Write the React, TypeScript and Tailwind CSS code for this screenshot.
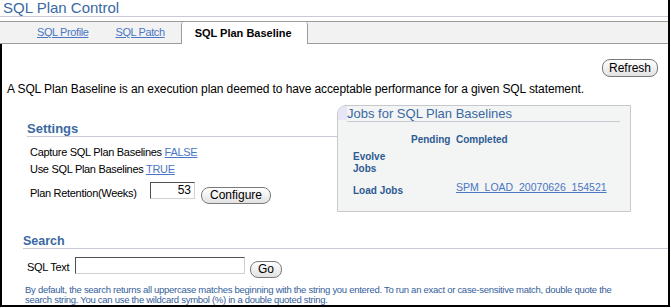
export default function App() {
  return (
    <div className="w-[671px] h-[308px] bg-white overflow-hidden font-['Liberation_Sans',Arial,sans-serif] text-black">
      <div className="w-[670px] h-[307px] border-r-2 border-black flex flex-col">
        <div className="h-[16px] pl-[3px] text-[15px] leading-[16px] text-[#3a68a2] whitespace-nowrap">SQL Plan Control</div>
        <div className="h-px bg-[#c8cad4]" />
        <div className="h-[4px]" />
        <div className="h-[23px] bg-[#f2f2f2] border-y border-[#9c9c9c] flex items-stretch">
          <div className="ml-[37px] self-center text-[11px] tracking-[-0.4px] text-[#4a76c4] underline">SQL Profile</div>
          <div className="ml-[27px] self-center text-[11px] tracking-[-0.4px] text-[#4a76c4] underline">SQL Patch</div>
          <div className="ml-[16px] w-[127px] -mb-px bg-white border-x border-[#9c9c9c] rounded-t-[3px] flex items-center pl-[13px] text-[11px] font-bold">
            SQL Plan Baseline
          </div>
        </div>
        <div className="flex-1 border-l-2 border-b-2 border-black flex flex-col">
          <div className="flex justify-end pr-[10px] mt-[15px]">
            <button className="w-[56px] h-[18px] rounded-[8px] border border-[#7a7a7a] bg-gradient-to-b from-white to-[#e2e2e2] text-[12px] leading-[16px] text-black">Refresh</button>
          </div>
          <div className="mt-[5px] pl-[5px] text-[12px] tracking-[-0.1px] leading-[14px] whitespace-nowrap">
            A SQL Plan Baseline is an execution plan deemed to have acceptable performance for a given SQL statement.
          </div>
          <div className="mt-[9px] flex items-start">
            <div className="ml-[25px] w-[310px] pt-[16px]">
              <div className="h-[15px] text-[13px] leading-[15px] font-bold text-[#3a68a2]">Settings</div>
              <div className="h-px bg-[#c8cad4]" />
              <div className="pl-[3px] text-[11px] tracking-[-0.3px]">
                <div className="mt-[8px] h-[14px] leading-[14px] whitespace-nowrap">
                  Capture SQL Plan Baselines <span className="text-[#4a76c4] underline">FALSE</span>
                </div>
                <div className="mt-[3px] h-[14px] leading-[14px] whitespace-nowrap">
                  Use SQL Plan Baselines <span className="text-[#4a76c4] underline">TRUE</span>
                </div>
                <div className="mt-[6px] flex items-start">
                  <div className="mt-[4px] w-[120px] leading-[14px] whitespace-nowrap">Plan Retention(Weeks)</div>
                  <div className="w-[45px] h-[17px] border border-t-[#505050] border-l-[#505050] border-b-[#d0d0d0] border-r-[#d0d0d0] bg-white text-right pr-[3px] text-[12px] tracking-normal leading-[15px]">53</div>
                  <button className="ml-[6px] mt-[5px] w-[70px] h-[17px] rounded-[8px] border border-[#7a7a7a] bg-gradient-to-b from-white to-[#e2e2e2] text-[12px] tracking-normal leading-[15px] text-black">Configure</button>
                </div>
              </div>
            </div>
            <div className="relative w-[294px] h-[107px] bg-[#f3f4f4] border border-[#c6c8ce] rounded-tl-[9px] overflow-hidden">
              <div className="absolute left-0 top-0 w-[9px] h-[14px] bg-[#e6e6f6]" />
              <div className="relative ml-[9px] mr-[10px]">
                <div className="h-[15px] text-[13px] leading-[15px] text-[#3a68a2] whitespace-nowrap">Jobs for SQL Plan Baselines</div>
                <div className="h-px bg-[#c8cad4]" />
              </div>
              <div className="ml-[15px] mt-[11px] grid grid-cols-[58px_45px_1fr] text-[10px] font-bold text-[#2e5b91]">
                <div className="h-[18px] leading-[13px]" />
                <div className="h-[18px] leading-[13px]">Pending</div>
                <div className="h-[18px] leading-[13px]">Completed</div>
                <div className="h-[30px] leading-[12px]">Evolve<br />Jobs</div>
                <div />
                <div />
                <div className="mt-[4px] leading-[12px] whitespace-nowrap">Load Jobs</div>
                <div />
                <div className="text-[10.5px] font-normal leading-[12px] text-[#4a76c4] underline whitespace-nowrap">SPM_LOAD_20070626_154521</div>
              </div>
            </div>
          </div>
          <div className="mt-[22px] ml-[21px]">
            <div className="h-[14px] text-[12.5px] leading-[14px] font-bold text-[#3a68a2]">Search</div>
            <div className="h-px bg-[#c8cad4]" />
            <div className="mt-[8px] flex items-start pl-[4px]">
              <div className="mt-[3px] w-[48px] text-[11px] tracking-[-0.3px] leading-[14px]">SQL Text</div>
              <div className="w-[170px] h-[17px] border border-t-[#505050] border-l-[#505050] border-b-[#d0d0d0] border-r-[#d0d0d0] bg-white" />
              <button className="ml-[5px] mt-[4px] w-[32px] h-[17px] rounded-[8px] border border-[#7a7a7a] bg-gradient-to-b from-white to-[#e2e2e2] text-[12px] leading-[15px] text-black">Go</button>
            </div>
            <div className="mt-[7px] ml-[2px] text-[9.5px] tracking-[-0.28px] leading-[10px] text-[#34609a] whitespace-nowrap">
              By default, the search returns all uppercase matches beginning with the string you entered. To run an exact or case-sensitive match, double quote the<br />
              search string. You can use the wildcard symbol (%) in a double quoted string.
            </div>
          </div>
        </div>
      </div>
    </div>
  );
}
